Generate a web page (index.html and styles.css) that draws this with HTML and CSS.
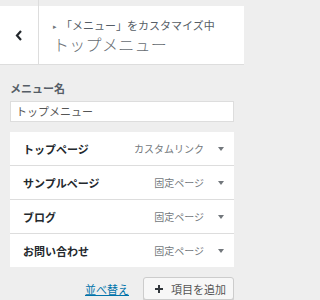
FILE: index.html
```html
<!DOCTYPE html>
<html lang="ja">
<head>
<meta charset="utf-8">
<link rel="stylesheet" href="styles.css">
</head>
<body>
<div class="strip"><div class="strip-back"></div></div>
<header class="header">
  <button class="back" aria-label="戻る">
    <svg width="8" height="11" viewBox="0 0 8 11"><path d="M6 1 L2 5.5 L6 10" fill="none" stroke="#23282d" stroke-width="2.2"/></svg>
  </button>
  <div class="titles">
    <div class="crumb"><span class="arrow">▸</span>「メニュー」をカスタマイズ中</div>
    <div class="title">トップメニュー</div>
  </div>
</header>
<main class="panel">
  <div class="label">メニュー名</div>
  <div class="input">トップメニュー</div>
  <ul class="items">
    <li class="item"><span class="name">トップページ</span><span class="type">カスタムリンク</span><span class="caret"></span></li>
    <li class="item"><span class="name">サンプルページ</span><span class="type">固定ページ</span><span class="caret"></span></li>
    <li class="item"><span class="name">ブログ</span><span class="type">固定ページ</span><span class="caret"></span></li>
    <li class="item"><span class="name">お問い合わせ</span><span class="type">固定ページ</span><span class="caret"></span></li>
  </ul>
  <div class="actions">
    <a class="reorder" href="#">並べ替え</a>
    <button class="add"><svg width="8" height="8" viewBox="0 0 8 8"><path d="M4 0 V8 M0 4 H8" stroke="#32373c" stroke-width="2"/></svg><span>項目を追加</span></button>
  </div>
</main>
</body>
</html>
```
FILE: styles.css
```css
* { box-sizing: border-box; }
html, body { margin: 0; padding: 0; }
body {
  background: #eeeeee;
  font-family: "Noto Sans CJK JP", "Noto Sans", sans-serif;
  color: #555d66;
  width: 244px;
  height: 300px;
  overflow: hidden;
}
.strip { height: 6px; display: flex; }
.strip-back { width: 39px; height: 6px; border-right: 1px solid #dddddd; }
.header {
  display: flex;
  height: 59px;
  background: #ffffff;
  border-bottom: 1px solid #dddddd;
}
.back {
  width: 39px;
  height: 58px;
  border: 0;
  border-right: 1px solid #dddddd;
  background: #ffffff;
  padding: 0;
  display: flex;
  align-items: center;
  justify-content: center;
}
.titles { padding: 12px 0 0 14px; }
.crumb { font-size: 11px; line-height: 14px; color: #555d66; white-space: nowrap; }
.arrow { font-size: 7px; display: inline-block; width: 8px; vertical-align: 1px; color: #72777c; }
.title { font-size: 16px; line-height: 22px; color: #666c72; font-weight: 300; letter-spacing: 0.3px; }
.panel { padding: 0 10px; }
.label {
  margin-top: 16px;
  font-size: 11px;
  line-height: 14px;
  font-weight: bold;
  color: #555d66;
}
.input {
  margin-top: 6px;
  height: 21px;
  background: #ffffff;
  border: 1px solid #dddddd;
  padding-left: 5px;
  font-size: 11px;
  line-height: 19px;
  color: #555555;
}
.items {
  list-style: none;
  margin: 10px 0 0;
  padding: 0;
  background: #ffffff;
}
.item {
  height: 34px;
  display: flex;
  align-items: center;
  padding: 0 10px 0 13px;
  border-bottom: 1px solid #dddddd;
}
.item:last-child { height: 33px; border-bottom: 0; }
.name { font-size: 11px; font-weight: bold; color: #23282d; flex: 1; }
.type { font-size: 10px; color: #72777c; margin-right: 14px; }
.caret {
  width: 0; height: 0;
  border-left: 3px solid transparent;
  border-right: 3px solid transparent;
  border-top: 4px solid #72777c;
}
.actions {
  margin-top: 10px;
  display: flex;
  justify-content: flex-end;
  align-items: center;
  gap: 14px;
}
.reorder { font-size: 11px; color: #0073aa; text-decoration: underline; line-height: 14px; }
.add {
  width: 91px;
  height: 23px;
  background: #f7f7f7;
  border: 1px solid #cccccc;
  border-radius: 3px;
  box-shadow: 0 1px 0 #cccccc;
  padding: 0 0 0 11px;
  display: flex;
  align-items: center;
  gap: 8px;
  font-family: inherit;
  font-size: 11px;
  color: #555555;
}
```
